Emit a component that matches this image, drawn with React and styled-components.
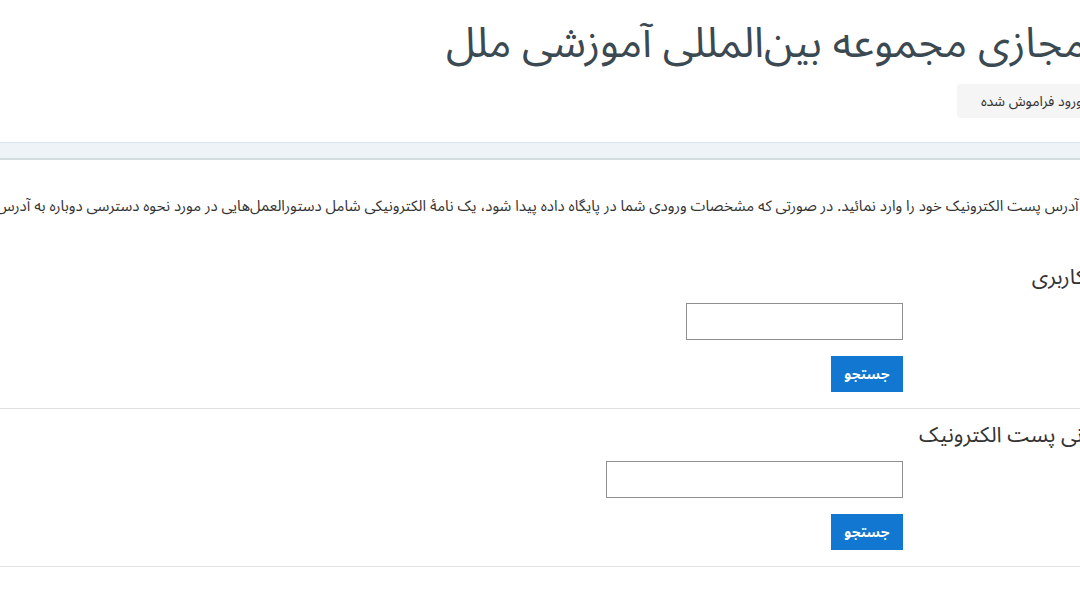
import styled, { createGlobalStyle } from "styled-components";

const GlobalStyle = createGlobalStyle`
  html, body {
    margin: 0;
    padding: 0;
    background: #ffffff;
    overflow: hidden;
  }
  body {
    font-family: "Noto Sans Arabic", "DejaVu Sans", sans-serif;
    font-size: 14px;
    color: #333333;
  }
`;

const Page = styled.div`
  direction: rtl;
  width: 1400px;
`;

const Header = styled.header`
  padding: 18px 64px 24px 0;
`;

const SiteTitle = styled.h1`
  margin: 0 0 14px 0;
  font-size: 42px;
  font-weight: normal;
  line-height: 52px;
  color: #3b4a52;
  white-space: nowrap;
`;

const Breadcrumb = styled.ol`
  display: inline-flex;
  align-items: center;
  gap: 13px;
  list-style: none;
  margin: 0;
  background: #f5f5f5;
  border-radius: 4px;
  padding: 0 24px;
  height: 34px;
  font-size: 14px;
  color: #333333;
  white-space: nowrap;
`;

const Crumb = styled.li`
  color: ${(p) => (p.$current ? "#333333" : "#1177d1")};
`;

const Divider = styled.li`
  color: #999999;
`;

const Band = styled.div`
  height: 15px;
  background: #edf3f6;
  border-top: 1px solid #dce2e5;
  border-bottom: 2px solid #d5dcdf;
`;

const Content = styled.main`
  padding-top: 36px;
`;

const Intro = styled.p`
  margin: 0 0 47px 0;
  padding-right: 94px;
  white-space: nowrap;
  font-size: 15px;
  line-height: 20px;
`;

const Section = styled.fieldset`
  border: 0;
  margin: 0;
  padding: 0 139px 0 0;
  border-bottom: 1px solid #e1e1e1;

  & + & {
    padding-top: 12px;
  }
`;

const Legend = styled.h3`
  margin: 0 0 12px 0;
  font-size: 21.5px;
  font-weight: normal;
  line-height: 28px;
  color: #333333;
  white-space: nowrap;
`;

const FormRow = styled.div`
  display: grid;
  grid-template-columns: 358px 1fr;
  margin-bottom: 16px;
`;

const Field = styled.div`
  grid-column: 2;
`;

const TextInput = styled.input`
  box-sizing: border-box;
  width: ${(p) => p.$w}px;
  height: 37px;
  border: 1px solid #8f8f8f;
  border-radius: 0;
  background: #ffffff;
  padding: 4px 8px;
  font-family: inherit;
  font-size: 14px;
  display: block;
`;

const Button = styled.button`
  width: 72px;
  height: 36px;
  border: 0;
  border-radius: 0;
  background: #1177d1;
  color: #ffffff;
  font-family: inherit;
  font-size: 14px;
  font-weight: bold;
  cursor: pointer;
`;

const SearchSection = ({ title, inputWidth }) => (
  <Section>
    <Legend>{title}</Legend>
    <FormRow>
      <Field>
        <TextInput type="text" $w={inputWidth} />
      </Field>
    </FormRow>
    <FormRow>
      <Field>
        <Button type="button">جستجو</Button>
      </Field>
    </FormRow>
  </Section>
);

export default function App() {
  return (
    <>
      <GlobalStyle />
      <Page>
        <Header>
          <SiteTitle>سامانه آموزش مجازی مجموعه بین‌المللی آموزشی ملل</SiteTitle>
          <Breadcrumb>
            <Crumb>صفحه اصلی</Crumb>
            <Divider>/</Divider>
            <Crumb>ورود به سایت</Crumb>
            <Divider>/</Divider>
            <Crumb $current>رمز ورود فراموش شده</Crumb>
          </Breadcrumb>
        </Header>
        <Band />
        <Content>
          <Intro>
            برای بازیابی رمز ورود خود، نام کاربری یا آدرس پست الکترونیک خود را وارد نمائید. در صورتی که مشخصات ورودی شما در پایگاه داده پیدا شود، یک نامهٔ الکترونیکی شامل دستورالعمل‌هایی در مورد نحوه دسترسی دوباره به آدرس پست الکترونیک شما ارسال خواهد شد.
          </Intro>
          <SearchSection title="جستجو بر اساس نام کاربری" inputWidth={217} />
          <SearchSection title="جستجو بر اساس نشانی پست الکترونیک" inputWidth={297} />
        </Content>
      </Page>
    </>
  );
}
